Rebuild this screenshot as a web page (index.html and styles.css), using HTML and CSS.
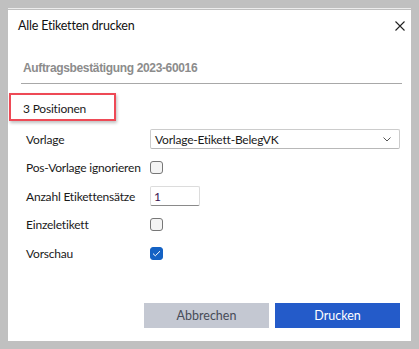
FILE: index.html
```html
<!DOCTYPE html>
<html lang="de">
<head>
  <meta charset="UTF-8">
  <meta name="viewport" content="width=device-width, initial-scale=1.0">
  <title>Alle Etiketten drucken</title>
  <link rel="stylesheet" href="styles.css">
</head>
<body>
  <div class="topline"></div>
  <div class="dialog">
    <div class="dialog-header">
      <span class="dialog-title">Alle Etiketten drucken</span>
      <svg class="close" width="10" height="10" viewBox="0 0 10 10">
        <path d="M0.5 0.5 L9.5 9.5 M9.5 0.5 L0.5 9.5" stroke="#222" stroke-width="1.1" fill="none"/>
      </svg>
    </div>

    <div class="subject">Auftragsbestätigung 2023-60016</div>

    <div class="count-box">3 Positionen</div>

    <div class="form">
      <label class="lbl">Vorlage</label>
      <div class="select">
        <span>Vorlage-Etikett-BelegVK</span>
        <svg width="8" height="5" viewBox="0 0 8 5">
          <path d="M0.5 0.5 L4 4 L7.5 0.5" stroke="#555" stroke-width="1" fill="none"/>
        </svg>
      </div>

      <label class="lbl">Pos-Vorlage ignorieren</label>
      <div><span class="check"></span></div>

      <label class="lbl">Anzahl Etikettensätze</label>
      <div><span class="num">1</span></div>

      <label class="lbl">Einzeletikett</label>
      <div><span class="check"></span></div>

      <label class="lbl">Vorschau</label>
      <div>
        <span class="check checked">
          <svg width="9" height="7" viewBox="0 0 9 7">
            <path d="M1 3.6 L3.3 5.8 L8 1.2" stroke="#fff" stroke-width="1" fill="none"/>
          </svg>
        </span>
      </div>
    </div>

    <div class="actions">
      <button class="btn btn-cancel">Abbrechen</button>
      <button class="btn btn-primary">Drucken</button>
    </div>
  </div>
</body>
</html>
```

FILE: styles.css
```css
body {
  margin: 0;
  padding: 8px 8px 0;
  background-color: #c0c0c0;
  font-family: Lato, "Noto Sans", sans-serif;
  font-size: 12px;
  letter-spacing: -0.2px;
  color: #1a1a1a;
}

.topline {
  width: 403px;
  height: 1px;
  background-color: #ececec;
  margin-bottom: 1px;
}

.dialog {
  width: 403px;
  height: 331px;
  background-color: #ffffff;
  display: flex;
  flex-direction: column;
}

.dialog-header {
  height: 31px;
  display: flex;
  align-items: center;
  justify-content: space-between;
  padding: 0 6px 0 10px;
}

.dialog-title {
  font-size: 12.5px;
  color: #111;
}

.close {
  margin-top: 1px;
}

.subject {
  margin: 0 9px 0 13px;
  padding: 19px 0 7px 2px;
  line-height: 16px;
  border-bottom: 1px solid #a8a8a8;
  font-family: "Liberation Sans", Arial, sans-serif;
  font-weight: bold;
  font-size: 12px;
  letter-spacing: -0.35px;
  color: #8c8c8c;
}

.count-box {
  margin: 9px 0 0 1px;
  padding: 6px 0 2px 12px;
  line-height: 16px;
  border: 2px solid #ee4a56;
  box-shadow: 1px 2px 3px rgba(0, 0, 0, 0.25);
  width: 91px;
}

.form {
  margin-top: 4px;
  padding-left: 18px;
  display: grid;
  grid-template-columns: 124px 250px;
  grid-template-rows: 28px 29px 28px 28px 30px;
  align-items: center;
}

.lbl {
  white-space: nowrap;
}

.select {
  height: 20px;
  box-sizing: border-box;
  border: 1px solid #cccccc;
  border-bottom-color: #b8b8b8;
  border-radius: 2px;
  padding: 0 8px 0 4px;
  display: flex;
  align-items: center;
  justify-content: space-between;
}

.check {
  display: flex;
  align-items: center;
  justify-content: center;
  width: 13px;
  height: 13px;
  box-sizing: border-box;
  border: 1px solid #777;
  border-radius: 3px;
  background-color: #f4f4f4;
}

.check.checked {
  border-color: #1462c4;
  background-color: #1462c4;
}

.num {
  display: flex;
  align-items: center;
  width: 50px;
  height: 20px;
  box-sizing: border-box;
  border: 1px solid #dcdcdc;
  border-bottom-color: #8a8a8a;
  border-radius: 2px;
  padding-left: 3px;
  color: #3a1450;
}

.actions {
  margin-top: auto;
  padding: 0 11px 13px 0;
  display: flex;
  justify-content: flex-end;
  gap: 6px;
}

.btn {
  width: 125px;
  height: 25px;
  border: none;
  font-family: Lato, "Noto Sans", sans-serif;
  font-size: 12.5px;
}

.btn-cancel {
  background-color: #c4c8d2;
  color: #474c58;
}

.btn-primary {
  background-color: #245bc9;
  color: #ffffff;
}
```
